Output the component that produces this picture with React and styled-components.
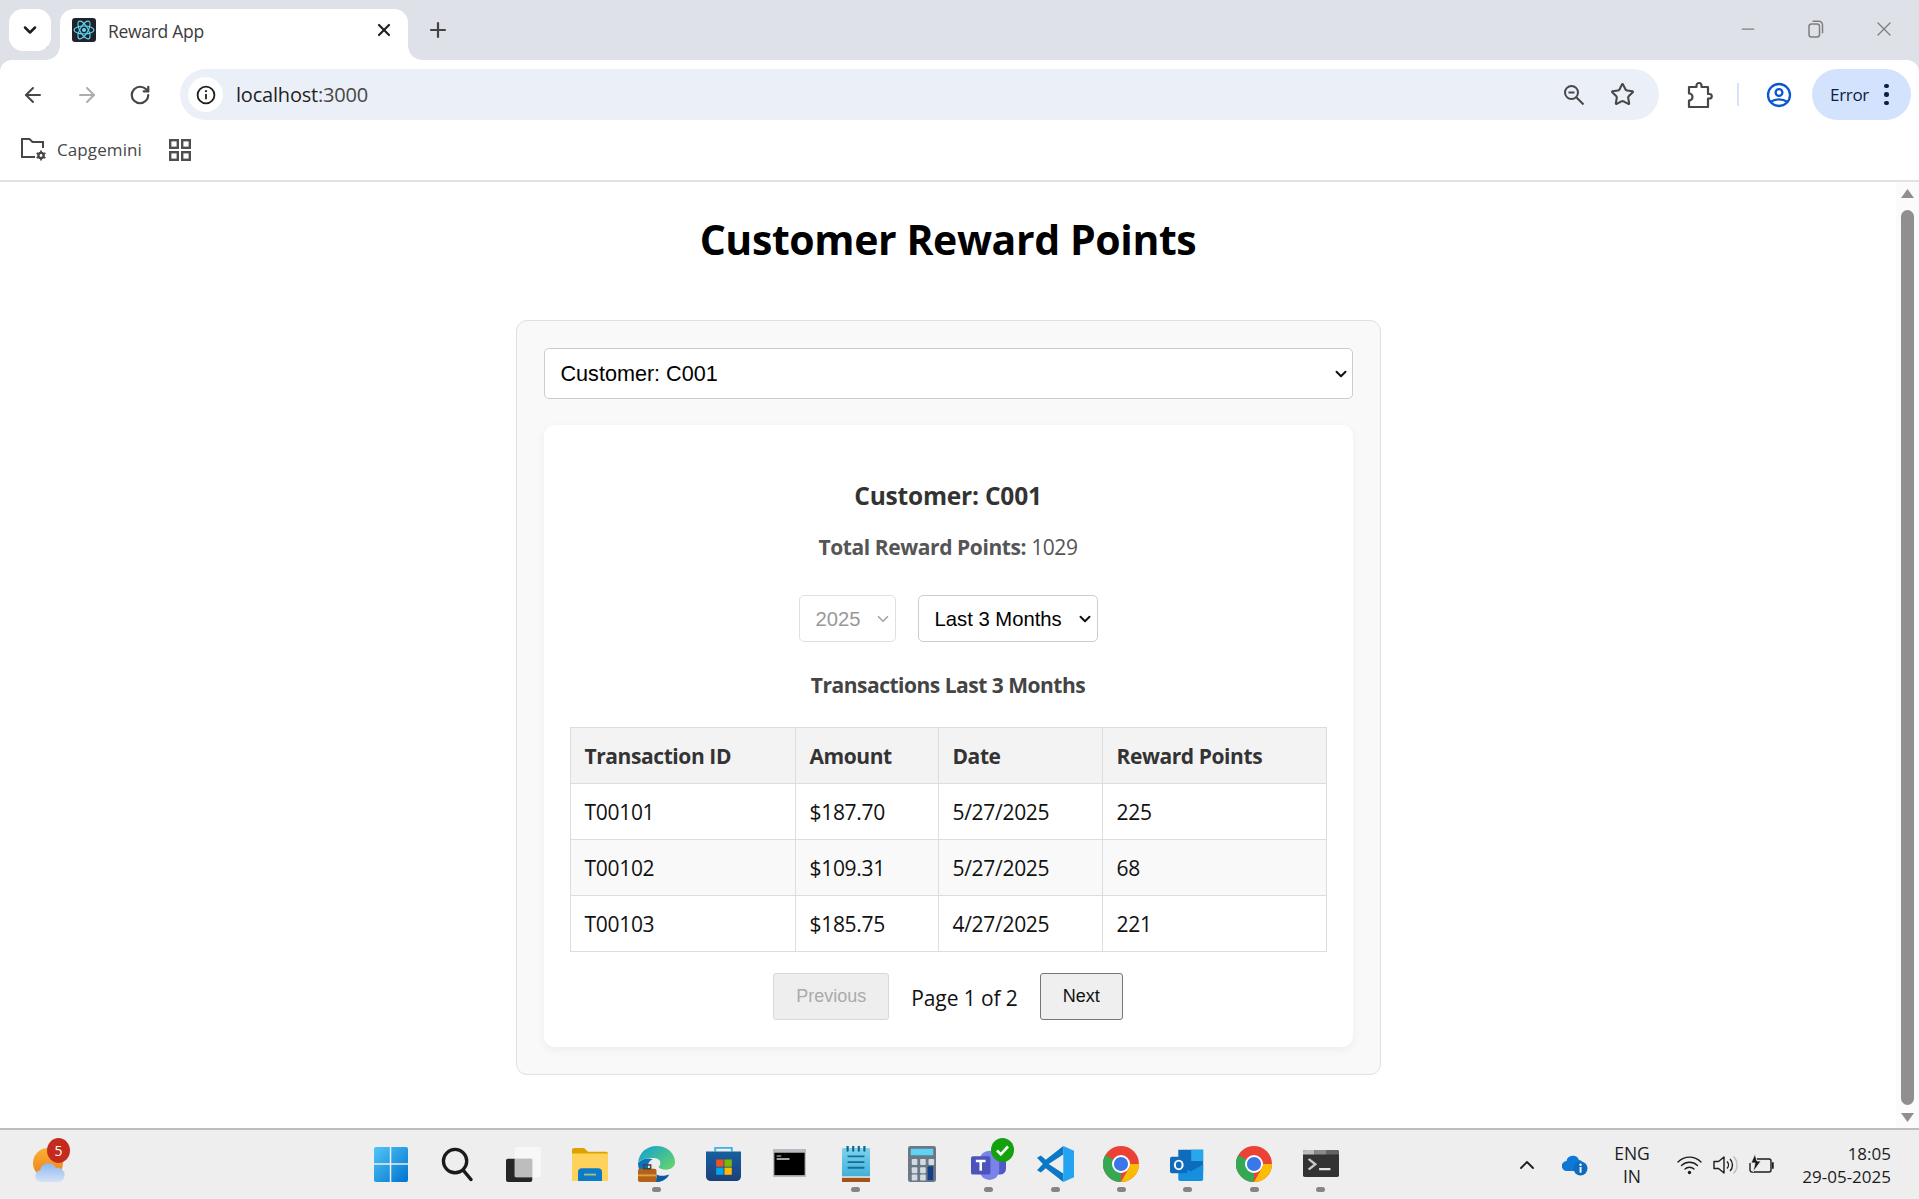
import React, { useState } from 'react';
import styled, { createGlobalStyle } from 'styled-components';
import { ArrowLeft, ArrowRight, RotateCw, Star, Plus, X, ChevronDown, ChevronUp, Minus } from 'lucide-react';

const uiFont = '"Open Sans", "Noto Sans", "Liberation Sans", sans-serif';
const formFont = '"Liberation Sans", Arial, sans-serif';

const GlobalStyle = createGlobalStyle`
  html, body { margin: 0; padding: 0; height: 100%; overflow: hidden; background: #fff; }
  * { box-sizing: border-box; }
  body { font-family: ${uiFont}; }
`;

const Screen = styled.div`
  width: 1919px;
  height: 1199px;
  display: flex;
  flex-direction: column;
  overflow: hidden;
`;

/* browser chrome */
const ChromeTop = styled.div`
  flex: none;
  background: #dee1e8;
`;

const TabStrip = styled.div`
  height: 60px;
  display: flex;
  align-items: flex-start;
  padding: 9px 0 0 9px;
`;

const TabSearch = styled.div`
  width: 42px;
  height: 42px;
  border-radius: 14px;
  background: #fff;
  display: flex;
  align-items: center;
  justify-content: center;
  color: #1f1f1f;
  margin-right: 9px;
`;

const Tab = styled.div`
  width: 348px;
  height: 51px;
  background: #fff;
  border-radius: 14px 14px 0 0;
  display: flex;
  align-items: center;
  padding: 0 14px 9px 12px;
  position: relative;
  &::before, &::after {
    content: '';
    position: absolute;
    bottom: 0;
    width: 14px;
    height: 14px;
  }
  &::before { left: -14px; background: radial-gradient(circle at 0 0, #dee1e8 13.5px, #fff 14px); }
  &::after { right: -14px; background: radial-gradient(circle at 14px 0, #dee1e8 13.5px, #fff 14px); }
`;

const TabTitle = styled.span`
  font-size: 17.5px;
  color: #3c3c3c;
  margin: 2px 0 0 12px;
  flex: 1;
  letter-spacing: -0.3px;
`;

const NewTab = styled.div`
  margin-left: 18px;
  height: 42px;
  display: flex;
  align-items: center;
  color: #444;
`;

const WindowControls = styled.div`
  margin-left: auto;
  display: flex;
  height: 40px;
  align-items: center;
  padding-right: 1px;
  color: #7f7f7f;
`;

const WindowButton = styled.div`
  width: 68px;
  display: flex;
  justify-content: center;
`;

const Toolbar = styled.div`
  height: 60px;
  background: #fff;
  display: flex;
  align-items: flex-start;
  padding: 9px 8px 0 0;
  border-radius: 12px 12px 0 0;
`;

const NavGroup = styled.div`
  width: 180px;
  flex: none;
  height: 51px;
  display: flex;
  align-items: center;
  padding-left: 21px;
  gap: 30px;
`;

const NavIcon = styled.span`
  display: flex;
  color: ${p => (p.$off ? '#adadad' : '#474747')};
`;

const Omnibox = styled.div`
  width: 1479px;
  height: 51px;
  background: #ebf0f8;
  border-radius: 26px;
  display: flex;
  align-items: center;
  padding: 0 24px 0 8px;
`;

const InfoChip = styled.div`
  width: 35px;
  height: 35px;
  border-radius: 50%;
  background: #fff;
  display: flex;
  align-items: center;
  justify-content: center;
`;

const Url = styled.span`
  margin-left: 13px;
  font-size: 20px;
  color: #1f1f1f;
  letter-spacing: -0.2px;
  flex: 1;
`;

const UrlPort = styled.span`
  color: #474747;
`;

const OmniActions = styled.div`
  display: flex;
  align-items: center;
  gap: 24px;
  color: #474747;
`;

const ToolActions = styled.div`
  flex: 1;
  height: 51px;
  display: flex;
  align-items: center;
  padding-left: 28px;
`;

const Divider = styled.span`
  width: 2px;
  height: 23px;
  background: #d3e3fd;
  margin: 0 27px 0 24px;
`;

const ErrorPill = styled.div`
  margin-left: auto;
  width: 99px;
  height: 51px;
  flex: none;
  border-radius: 26px;
  background: #d3e3fd;
  display: flex;
  align-items: center;
  padding-left: 18px;
  font-size: 17px;
  color: #0a1f44;
  letter-spacing: -0.3px;
  gap: 15px;
`;

const Dots = styled.span`
  display: flex;
  flex-direction: column;
  gap: 4px;
  i {
    display: block;
    width: 4.5px;
    height: 4.5px;
    border-radius: 50%;
    background: #0a1f44;
  }
`;

const Bookmarks = styled.div`
  height: 62px;
  flex: none;
  background: #fff;
  border-bottom: 2px solid #e2e2e2;
  display: flex;
  align-items: center;
  padding: 0 0 1px 20px;
`;

const BookmarkLabel = styled.span`
  font-size: 17px;
  color: #474747;
  margin: 0 27px 0 10px;
  letter-spacing: 0.1px;
`;

/* page */
const Viewport = styled.div`
  flex: 1;
  min-height: 0;
  display: flex;
  background: #fff;
`;

const Page = styled.main`
  flex: 1;
  min-width: 0;
  padding-top: 30px;
`;

const Title = styled.h1`
  margin: 0 0 54px;
  font-size: 41px;
  line-height: 54px;
  font-weight: 700;
  text-align: center;
  color: #000;
  letter-spacing: -0.4px;
`;

const Panel = styled.section`
  width: 865px;
  margin: 0 auto;
  padding: 27px;
  background: #f9f9f9;
  border: 1px solid #e0e0e0;
  border-radius: 11px;
  display: flex;
  flex-direction: column;
  gap: 26px;
`;

const SelectBox = styled.div`
  position: relative;
  width: ${p => p.$w};
  flex: none;
  svg {
    position: absolute;
    top: 50%;
    right: ${p => p.$arrowRight}px;
    transform: translateY(-50%);
    color: ${p => (p.$off ? '#a5a5a5' : '#111')};
    pointer-events: none;
  }
`;

const Select = styled.select`
  appearance: none;
  display: block;
  width: 100%;
  height: ${p => p.$h}px;
  padding: 0 0 0 ${p => p.$pad}px;
  font-family: ${formFont};
  font-size: ${p => p.$size}px;
  color: #000;
  background: #fff;
  border: 1px solid #ccc;
  border-radius: 5px;
  &:disabled {
    opacity: 1;
    color: #999;
    border-color: #e0e0e0;
  }
`;

const Card = styled.div`
  background: #fff;
  border-radius: 11px;
  padding: 55px 26px 27px;
  box-shadow: 0 3px 10px rgba(0, 0, 0, 0.05);
  text-align: center;
`;

const CustomerName = styled.h2`
  margin: 0 0 20px;
  font-size: 24.5px;
  line-height: 32px;
  font-weight: 700;
  color: #333;
  letter-spacing: -0.2px;
`;

const TotalPoints = styled.p`
  margin: 0 0 33px;
  font-size: 21px;
  line-height: 30px;
  color: #555;
  letter-spacing: -0.42px;
  strong { font-weight: 700; }
`;

const Filters = styled.div`
  display: flex;
  justify-content: center;
  gap: 22px;
  margin-bottom: 28px;
`;

const TableHeading = styled.h3`
  margin: 0 0 27px;
  font-size: 21px;
  line-height: 30px;
  font-weight: 700;
  color: #444;
  letter-spacing: -0.5px;
`;

const Table = styled.table`
  width: 756px;
  table-layout: fixed;
  border-collapse: collapse;
  font-size: 21px;
  text-align: left;
`;

const HeadCell = styled.th`
  width: ${p => p.$w}px;
  height: 56px;
  padding: 0 14px;
  background: #f3f3f3;
  border: 1px solid #ddd;
  color: #333;
  font-weight: 700;
  letter-spacing: -0.42px;
`;

const Row = styled.tr`
  &:nth-child(even) td { background: #f9f9f9; }
`;

const Cell = styled.td`
  height: 56px;
  padding: 0 14px;
  border: 1px solid #ddd;
  color: #111;
  letter-spacing: -0.3px;
`;

const Pager = styled.div`
  margin-top: 21px;
  display: flex;
  justify-content: center;
  align-items: center;
  gap: 22px;
`;

const PageButton = styled.button`
  height: 47px;
  width: ${p => p.$w}px;
  font-family: ${formFont};
  font-size: 18px;
  color: #111;
  background: #efefef;
  border: 1px solid #767676;
  border-radius: 3px;
  padding: 0;
  &:disabled {
    color: #aaa;
    background: #eee;
    border-color: #d8d8d8;
  }
`;

const PageLabel = styled.span`
  font-size: 21px;
  color: #111;
  letter-spacing: -0.1px;
  position: relative;
  top: 1px;
`;

const Scrollbar = styled.div`
  width: 23px;
  flex: none;
  background: #fbfbfb;
  display: flex;
  flex-direction: column;
  align-items: center;
  padding: 7px 0 6px;
  color: #8f8f8f;
`;

const ScrollThumb = styled.div`
  flex: 1;
  width: 13px;
  margin: 12px 0 8px;
  border-radius: 7px;
  background: #8f8f8f;
`;

/* taskbar */
const Taskbar = styled.footer`
  height: 71px;
  flex: none;
  background: #eeeeee;
  border-top: 2px solid #bdbdbd;
  display: flex;
  align-items: stretch;
`;

const Weather = styled.div`
  width: 358px;
  flex: none;
  padding: 9px 0 0 29px;
`;

const Badged = styled.div`
  position: relative;
  width: 40px;
  height: 44px;
  svg { position: absolute; left: 3px; top: 9px; }
`;

const CountBadge = styled.span`
  position: absolute;
  left: 18px;
  top: -1px;
  width: 23px;
  height: 25px;
  border-radius: 50%;
  background: #c42b1c;
  color: #fff;
  font-size: 14px;
  line-height: 25px;
  text-align: center;
`;

const Apps = styled.div`
  display: flex;
`;

const AppSlot = styled.div`
  width: 66.4px;
  position: relative;
  display: flex;
  justify-content: center;
  align-items: flex-start;
  padding-top: ${p => p.$top ?? 16}px;
`;

const RunningDot = styled.span`
  position: absolute;
  left: 50%;
  margin-left: -4.5px;
  top: 57px;
  width: 9px;
  height: 5px;
  border-radius: 3px;
  background: #858585;
`;

const TeamsCheck = styled.span`
  position: absolute;
  left: 35px;
  top: 8px;
  width: 23px;
  height: 24px;
  border-radius: 50%;
  background: #13a10e;
  display: flex;
  align-items: center;
  justify-content: center;
`;

const Tray = styled.div`
  margin-left: auto;
  display: flex;
  align-items: center;
  padding-right: 28px;
  color: #1c1c1c;
`;

const TrayIcon = styled.span`
  display: flex;
  width: ${p => p.$w}px;
  justify-content: center;
`;

const Lang = styled.div`
  width: 78px;
  text-align: center;
  font-size: 17.5px;
  line-height: 23px;
`;

const Clock = styled.div`
  width: 112px;
  text-align: right;
  font-size: 17px;
  line-height: 23px;
`;

function ReactFavicon() {
  return (
    <svg width="24" height="24" viewBox="0 0 24 24">
      <rect width="24" height="24" rx="3" fill="#20232a" />
      <g fill="none" stroke="#61dafb" strokeWidth="1.1">
        <ellipse cx="12" cy="12" rx="10" ry="4" />
        <ellipse cx="12" cy="12" rx="10" ry="4" transform="rotate(60 12 12)" />
        <ellipse cx="12" cy="12" rx="10" ry="4" transform="rotate(120 12 12)" />
      </g>
      <circle cx="12" cy="12" r="2" fill="#61dafb" />
    </svg>
  );
}

function InfoIcon() {
  return (
    <svg width="20" height="20" viewBox="0 0 20 20" fill="none" stroke="#1f1f1f" strokeWidth="1.8">
      <circle cx="10" cy="10" r="8.4" />
      <path d="M10 9v5.2" />
      <circle cx="10" cy="6.2" r="1.1" fill="#1f1f1f" stroke="none" />
    </svg>
  );
}

function ZoomOutIcon() {
  return (
    <svg width="24" height="24" viewBox="0 0 24 24" fill="none" stroke="currentColor" strokeWidth="2">
      <circle cx="9.5" cy="9.5" r="6.5" />
      <path d="M6.5 9.5h6M14.5 14.5l7 7" />
    </svg>
  );
}

function PuzzleIcon() {
  return (
    <svg width="26" height="28" viewBox="0 0 26 28" fill="none" stroke="#474747" strokeWidth="2.2" strokeLinejoin="round">
      <path d="M2 6h7.5V4.5a2.5 2.5 0 0 1 5 0V6H21v7h1.5a2 2 0 0 1 0 4.5H21V26H2v-6.5a3.5 3.5 0 0 0 0-7z" />
    </svg>
  );
}

function ProfileIcon() {
  return (
    <svg width="26" height="26" viewBox="0 0 26 26" fill="none" stroke="#0b57d0" strokeWidth="2.3">
      <circle cx="13" cy="13" r="11" />
      <circle cx="13" cy="10.5" r="3.4" />
      <path d="M4.5 20c5-3.6 12-3.6 17 0" />
    </svg>
  );
}

function FolderGearIcon() {
  return (
    <svg width="27" height="25" viewBox="0 0 27 25" fill="none" stroke="#474747" strokeWidth="2">
      <path d="M15 20H2V2h7.5l3 3H23v6" />
      <circle cx="21" cy="18.5" r="2.6" strokeWidth="2.4" />
      <path d="M21 13.5v2M21 21.5v2M16.6 16l1.8 1M23.6 20l1.8 1M16.6 21l1.8-1M23.6 17l1.8-1" strokeWidth="1.8" />
    </svg>
  );
}

function AppsGridIcon() {
  return (
    <svg width="22" height="22" viewBox="0 0 22 22" fill="none" stroke="#4f4f4f" strokeWidth="2.4">
      <rect x="1.2" y="1.2" width="7.6" height="7.6" />
      <rect x="13.2" y="1.2" width="7.6" height="7.6" />
      <rect x="1.2" y="13.2" width="7.6" height="7.6" />
      <rect x="13.2" y="13.2" width="7.6" height="7.6" />
    </svg>
  );
}

function RestoreIcon() {
  return (
    <svg width="16" height="18" viewBox="0 0 16 18" fill="none" stroke="currentColor" strokeWidth="1.5">
      <rect x="1" y="4" width="10.5" height="13" rx="2.5" />
      <path d="M4.5 1.2h6.5a3.5 3.5 0 0 1 3.5 3.5v8.5" />
    </svg>
  );
}

function WeatherIcon() {
  return (
    <svg width="34" height="36" viewBox="0 0 34 36">
      <defs>
        <linearGradient id="sunFill" x1="0" y1="0" x2="0" y2="1">
          <stop offset="0" stopColor="#f9b233" />
          <stop offset="1" stopColor="#ee7d1a" />
        </linearGradient>
        <linearGradient id="cloudFill" x1="0" y1="0" x2="0" y2="1">
          <stop offset="0" stopColor="#8db6ee" />
          <stop offset="1" stopColor="#d5e3f7" />
        </linearGradient>
      </defs>
      <circle cx="16" cy="15" r="15" fill="url(#sunFill)" />
      <path d="M9 34a6 6 0 0 1-1-11.8A8.5 8.5 0 0 1 24 20a6.8 6.8 0 0 1 3 14z" fill="url(#cloudFill)" />
    </svg>
  );
}

function StartIcon() {
  return (
    <svg width="34" height="35" viewBox="0 0 36 36" preserveAspectRatio="none">
      <defs>
        <linearGradient id="startFill" x1="0" y1="0" x2="1" y2="1">
          <stop offset="0" stopColor="#52c6f8" />
          <stop offset="1" stopColor="#0072ce" />
        </linearGradient>
      </defs>
      <rect width="36" height="36" rx="2" fill="url(#startFill)" />
      <path d="M17.5 0v36M0 17.5h36" stroke="#eee" strokeWidth="1.6" />
    </svg>
  );
}

function SearchIcon() {
  return (
    <svg width="33" height="35" viewBox="0 0 34 36" fill="none" stroke="#1a1a1a" strokeWidth="3.4" strokeLinecap="round" preserveAspectRatio="none">
      <circle cx="14.5" cy="14.5" r="12" />
      <path d="M23 24l8 9.5" />
    </svg>
  );
}

function TaskViewIcon() {
  return (
    <svg width="35" height="35" viewBox="0 0 36 36" preserveAspectRatio="none">
      <rect x="0" y="12" width="27" height="24" rx="2" fill="#262626" />
      <rect x="9" y="0" width="27" height="31" rx="2" fill="#f8f8f8" opacity="0.85" />
      <rect x="9" y="12" width="18" height="19" fill="#bdbdbd" />
    </svg>
  );
}

function ExplorerIcon() {
  return (
    <svg width="36" height="33" viewBox="0 0 36 36" preserveAspectRatio="none">
      <path d="M0 2a2 2 0 0 1 2-2h10l4 4h18a2 2 0 0 1 2 2v8H0z" fill="#e0a100" />
      <path d="M0 6h36v30H0z" fill="#ffd35b" />
      <path d="M6 36V26a4 4 0 0 1 4-4h16a4 4 0 0 1 4 4v10z" fill="#0c7cc9" />
      <rect x="12" y="28" width="12" height="2" fill="#ffd35b" opacity="0.7" />
    </svg>
  );
}

function EdgeIcon() {
  return (
    <svg width="37" height="36" viewBox="0 0 38 38" preserveAspectRatio="none">
      <defs>
        <linearGradient id="edgeFill" x1="0" y1="0" x2="1" y2="0.8">
          <stop offset="0" stopColor="#0f9fd8" />
          <stop offset="1" stopColor="#63d26f" />
        </linearGradient>
      </defs>
      <path d="M0 18C1 7 9 0 19 0c11 0 19 8 19 17 0 5-4 8-9 8-4 0-7-1-8-3 3-2 3-8-3-9C10 12 3 14 0 18z" fill="url(#edgeFill)" />
      <path d="M0 18c3-4 10-6 15-4-5 2-6 8-3 13 2 4 6 8 14 9-2 1-4 2-7 2C8 38 0 29 0 18z" fill="#0d71b9" />
      <path d="M19 38c5 0 11-3 13-8-5 2-10 2-13 0z" fill="#0a5aa5" />
      <rect x="0" y="24" width="19" height="14" rx="2" fill="#b4621a" />
      <rect x="0" y="30" width="19" height="2" fill="#e0a33b" />
      <rect x="6" y="20" width="7" height="4" fill="none" stroke="#444" strokeWidth="1.6" />
    </svg>
  );
}

function StoreIcon() {
  return (
    <svg width="35" height="36" viewBox="0 0 38 40" preserveAspectRatio="none">
      <defs>
        <linearGradient id="storeFill" x1="0" y1="0" x2="0" y2="1">
          <stop offset="0" stopColor="#17609f" />
          <stop offset="1" stopColor="#1d3f7a" />
        </linearGradient>
      </defs>
      <path d="M10 6V2h18v4" fill="none" stroke="#3bb0ea" strokeWidth="2" />
      <path d="M0 6h38v28a5 5 0 0 1-5 5H5a5 5 0 0 1-5-5z" fill="url(#storeFill)" />
      <rect x="11" y="15" width="8" height="8" fill="#f25022" />
      <rect x="20" y="15" width="8" height="8" fill="#7fba00" />
      <rect x="11" y="24" width="8" height="8" fill="#00a4ef" />
      <rect x="20" y="24" width="8" height="8" fill="#ffb900" />
    </svg>
  );
}

function CmdIcon() {
  return (
    <svg width="33" height="28" viewBox="0 0 36 30" preserveAspectRatio="none">
      <rect width="36" height="30" fill="#b8bcc0" />
      <rect x="1.5" y="4" width="33" height="24" fill="#000" />
      <path d="M4 7h5v1H4zM4 10h14v1.5H4z" fill="#d9d9d9" />
    </svg>
  );
}

function NotepadIcon() {
  return (
    <svg width="28" height="36" viewBox="0 0 30 38" preserveAspectRatio="none">
      <defs>
        <linearGradient id="padFill" x1="0" y1="0" x2="0" y2="1">
          <stop offset="0" stopColor="#7ed3ee" />
          <stop offset="1" stopColor="#36a9d6" />
        </linearGradient>
      </defs>
      <rect y="2" width="30" height="36" rx="1" fill="url(#padFill)" />
      <rect y="33" width="30" height="5" fill="#a5521a" />
      <rect y="32" width="30" height="1.5" fill="#f3efe6" />
      <path d="M6 0v5M12 0v5M18 0v5M24 0v5" stroke="#14688f" strokeWidth="2.4" strokeLinecap="round" />
      <path d="M6 11h18M6 17h18M6 23h18" stroke="#136f97" strokeWidth="2" />
    </svg>
  );
}

function CalculatorIcon() {
  const keys = [[4, 14], [13, 14], [22, 14], [4, 23], [13, 23], [4, 31], [13, 31]];
  return (
    <svg width="28" height="36" viewBox="0 0 30 39" preserveAspectRatio="none">
      <rect width="30" height="39" rx="2.5" fill="#6b7885" />
      <rect x="3" y="3" width="24" height="7" fill="#5fd3f3" />
      {keys.map(([x, y]) => (
        <rect key={`${x}-${y}`} x={x} y={y} width="6" height="6.5" rx="1" fill="#d3dae1" />
      ))}
      <rect x="21" y="22" width="6" height="15" rx="1" fill="#123f86" />
    </svg>
  );
}

function TeamsIcon() {
  return (
    <svg width="35" height="33" viewBox="0 0 36 36" preserveAspectRatio="none">
      <rect x="23" y="8" width="13" height="22" rx="6" fill="#5059c9" />
      <rect x="9" y="4" width="20" height="32" rx="10" fill="#7b83eb" />
      <rect x="0" y="10" width="20" height="20" rx="2" fill="#4b53bc" />
      <path d="M5 14h10v2.5h-3.7V26H8.7v-9.5H5z" fill="#fff" />
    </svg>
  );
}

function VsCodeIcon() {
  return (
    <svg width="37" height="36" viewBox="0 0 38 38" preserveAspectRatio="none">
      <path d="M27 0l11 5v28l-11 5V0z" fill="#24a4f0" />
      <path d="M27 0v9L12 19l15 10v9L9 23.5 4 28 0 25.5 6 19 0 12.5 4 10l5 4.5z" fill="#0a78c6" />
    </svg>
  );
}

function ChromeIcon() {
  return (
    <svg width="36" height="36" viewBox="0 0 38 38">
      <circle cx="19" cy="19" r="19" fill="#ea4335" />
      <path d="M19 19L2.5 9.5A19 19 0 0 0 19 38z" fill="#34a853" />
      <path d="M19 19h19A19 19 0 0 1 19 38L28.5 21.5z" fill="#fbbc04" />
      <circle cx="19" cy="19" r="9.5" fill="#fff" />
      <circle cx="19" cy="19" r="7.5" fill="#3b78e7" />
    </svg>
  );
}

function OutlookIcon() {
  return (
    <svg width="35" height="33" viewBox="0 0 38 38" preserveAspectRatio="none">
      <rect x="9" y="2" width="27" height="26" fill="#0f6cbd" />
      <rect x="23" y="2" width="13" height="13" fill="#28a8ea" />
      <path d="M9 19l13.5 8L36 19v17a2 2 0 0 1-2 2H11a2 2 0 0 1-2-2z" fill="#1490df" />
      <rect x="0" y="10" width="19" height="19" rx="2" fill="#0f6cbd" />
      <ellipse cx="9.5" cy="19.5" rx="4.2" ry="5" fill="none" stroke="#fff" strokeWidth="2.2" />
    </svg>
  );
}

function TerminalIcon() {
  return (
    <svg width="36" height="27" viewBox="0 0 38 36" preserveAspectRatio="none">
      <rect width="38" height="36" rx="2.5" fill="#333" />
      <path d="M0 2.5A2.5 2.5 0 0 1 2.5 0H12v6H0z" fill="#bdbdbd" />
      <rect x="12" y="0" width="13" height="6" fill="#8a8a8a" />
      <path d="M25 0h10.5A2.5 2.5 0 0 1 38 2.5V6H25z" fill="#636363" />
      <path d="M6 12l7 7-7 7" fill="none" stroke="#c9c9c9" strokeWidth="2.8" />
      <rect x="17" y="24" width="12" height="3" fill="#e4e4e4" />
    </svg>
  );
}

function OneDriveIcon() {
  return (
    <svg width="26" height="22" viewBox="0 0 26 22">
      <path d="M5 17a5 5 0 0 1-.5-10A6.5 6.5 0 0 1 17 6a5 5 0 0 1 4 5H20a6 6 0 0 0-6 6z" fill="#0f78d4" />
      <circle cx="18.5" cy="14.5" r="7" fill="#0f6cbd" />
      <rect x="17.6" y="13" width="1.9" height="5.6" fill="#fff" />
      <circle cx="18.5" cy="10.8" r="1.2" fill="#fff" />
    </svg>
  );
}

function WifiIcon() {
  return (
    <svg width="25" height="20" viewBox="0 0 25 20" fill="none" stroke="#1c1c1c" strokeWidth="1.4" strokeLinecap="round">
      <path d="M1 7c6.5-6.5 16.5-6.5 23 0" />
      <path d="M4.5 10.5c4.5-4.3 11.500-4.3 16 0" />
      <path d="M8 14c2.5-2.3 6.5-2.3 9 0" />
      <circle cx="12.5" cy="17.5" r="1.7" fill="#1c1c1c" stroke="none" />
    </svg>
  );
}

function VolumeIcon() {
  return (
    <svg width="25" height="22" viewBox="0 0 25 22" fill="none" stroke="#1c1c1c" strokeWidth="1.4">
      <path d="M1 7.5h4.5L11 3v16l-5.5-4.500H1z" strokeLinejoin="round" />
      <path d="M14 7.5a5 5 0 0 1 0 7M17 5a8.5 8.5 0 0 1 0 12" />
      <path d="M20.5 2.5a12 12 0 0 1 0 17" stroke="#bdbdbd" />
    </svg>
  );
}

function BatteryIcon() {
  return (
    <svg width="25" height="21" viewBox="0 0 25 21" fill="none" stroke="#1c1c1c" strokeWidth="1.4">
      <path d="M8 5h12a2 2 0 0 1 2 2v9a2 2 0 0 1-2 2H3a2 2 0 0 1-2-2v-7" />
      <path d="M23 9h1v5h-1" fill="#1c1c1c" />
      <path d="M6 0L2 9h4l-2 9 8-11H8z" fill="#1c1c1c" stroke="#eee" strokeWidth="0.8" />
    </svg>
  );
}

const taskApps = [
  { key: 'start', icon: <StartIcon />, top: 17 },
  { key: 'search', icon: <SearchIcon />, top: 17 },
  { key: 'taskview', icon: <TaskViewIcon />, top: 17 },
  { key: 'explorer', icon: <ExplorerIcon />, top: 18 },
  { key: 'edge', icon: <EdgeIcon />, running: true },
  { key: 'store', icon: <StoreIcon />, top: 16 },
  { key: 'cmd', icon: <CmdIcon />, top: 19 },
  { key: 'notepad', icon: <NotepadIcon />, running: true },
  { key: 'calc', icon: <CalculatorIcon /> },
  { key: 'teams', icon: <TeamsIcon />, running: true, check: true, top: 17 },
  { key: 'vscode', icon: <VsCodeIcon />, running: true },
  { key: 'chrome', icon: <ChromeIcon />, running: true },
  { key: 'outlook', icon: <OutlookIcon />, running: true, top: 18 },
  { key: 'chrome2', icon: <ChromeIcon />, running: true },
  { key: 'terminal', icon: <TerminalIcon />, running: true, top: 20 },
];

const columns = [
  { label: 'Transaction ID', width: 225 },
  { label: 'Amount', width: 143 },
  { label: 'Date', width: 164 },
  { label: 'Reward Points', width: 224 },
];

const transactions = [
  { id: 'T00101', amount: '$187.70', date: '5/27/2025', points: 225 },
  { id: 'T00102', amount: '$109.31', date: '5/27/2025', points: 68 },
  { id: 'T00103', amount: '$185.75', date: '4/27/2025', points: 221 },
];

function App() {
  const [customer, setCustomer] = useState('C001');
  const [range, setRange] = useState('last3');

  return (
    <Screen>
      <GlobalStyle />
      <ChromeTop>
        <TabStrip>
          <TabSearch><ChevronDown size={20} strokeWidth={3} /></TabSearch>
          <Tab>
            <ReactFavicon />
            <TabTitle>Reward App</TabTitle>
            <X size={20} strokeWidth={2.6} color="#222" />
          </Tab>
          <NewTab><Plus size={24} strokeWidth={2.2} /></NewTab>
          <WindowControls>
            <WindowButton><Minus size={20} strokeWidth={1.5} /></WindowButton>
            <WindowButton><RestoreIcon /></WindowButton>
            <WindowButton><X size={24} strokeWidth={1.4} /></WindowButton>
          </WindowControls>
        </TabStrip>

        <Toolbar>
          <NavGroup>
            <NavIcon><ArrowLeft size={24} strokeWidth={2} /></NavIcon>
            <NavIcon $off><ArrowRight size={24} strokeWidth={2} /></NavIcon>
            <NavIcon><RotateCw size={22} strokeWidth={2.4} /></NavIcon>
          </NavGroup>
          <Omnibox>
            <InfoChip><InfoIcon /></InfoChip>
            <Url>localhost<UrlPort>:3000</UrlPort></Url>
            <OmniActions>
              <ZoomOutIcon />
              <Star size={25} strokeWidth={2} />
            </OmniActions>
          </Omnibox>
          <ToolActions>
            <PuzzleIcon />
            <Divider />
            <ProfileIcon />
            <ErrorPill>
              Error
              <Dots><i /><i /><i /></Dots>
            </ErrorPill>
          </ToolActions>
        </Toolbar>
      </ChromeTop>

      <Bookmarks>
        <FolderGearIcon />
        <BookmarkLabel>Capgemini</BookmarkLabel>
        <AppsGridIcon />
      </Bookmarks>

      <Viewport>
        <Page>
          <Title>Customer Reward Points</Title>
          <Panel>
            <SelectBox $w="100%" $arrowRight={3}>
              <Select $h={51} $pad={16} $size={21.6} value={customer} onChange={e => setCustomer(e.target.value)}>
                <option value="C001">Customer: C001</option>
                <option value="C002">Customer: C002</option>
              </Select>
              <ChevronDown size={18} strokeWidth={2.6} />
            </SelectBox>
            <Card>
              <CustomerName>Customer: {customer}</CustomerName>
              <TotalPoints><strong>Total Reward Points:</strong> 1029</TotalPoints>
              <Filters>
                <SelectBox $w="97px" $arrowRight={4} $off>
                  <Select disabled $h={47} $pad={16} $size={20.25} defaultValue="2025">
                    <option>2025</option>
                  </Select>
                  <ChevronDown size={18} strokeWidth={2.2} />
                </SelectBox>
                <SelectBox $w="180px" $arrowRight={4}>
                  <Select $h={47} $pad={16} $size={20.25} value={range} onChange={e => setRange(e.target.value)}>
                    <option value="last3">Last 3 Months</option>
                    <option value="all">All</option>
                  </Select>
                  <ChevronDown size={18} strokeWidth={2.6} />
                </SelectBox>
              </Filters>
              <TableHeading>Transactions Last 3 Months</TableHeading>
              <Table>
                <thead>
                  <tr>
                    {columns.map(col => (
                      <HeadCell key={col.label} $w={col.width}>{col.label}</HeadCell>
                    ))}
                  </tr>
                </thead>
                <tbody>
                  {transactions.map(t => (
                    <Row key={t.id}>
                      <Cell>{t.id}</Cell>
                      <Cell>{t.amount}</Cell>
                      <Cell>{t.date}</Cell>
                      <Cell>{t.points}</Cell>
                    </Row>
                  ))}
                </tbody>
              </Table>
              <Pager>
                <PageButton disabled $w={116}>Previous</PageButton>
                <PageLabel>Page 1 of 2</PageLabel>
                <PageButton $w={83}>Next</PageButton>
              </Pager>
            </Card>
          </Panel>
        </Page>
        <Scrollbar>
          <svg width="13" height="9" viewBox="0 0 13 9"><path d="M6.5 0L13 9H0z" fill="currentColor" /></svg>
          <ScrollThumb />
          <svg width="13" height="9" viewBox="0 0 13 9"><path d="M0 0h13L6.5 9z" fill="currentColor" /></svg>
        </Scrollbar>
      </Viewport>

      <Taskbar>
        <Weather>
          <Badged>
            <WeatherIcon />
            <CountBadge>5</CountBadge>
          </Badged>
        </Weather>
        <Apps>
          {taskApps.map(app => (
            <AppSlot key={app.key} $top={app.top}>
              {app.icon}
              {app.check && (
                <TeamsCheck>
                  <svg width="13" height="11" viewBox="0 0 13 11" fill="none" stroke="#fff" strokeWidth="2.6"><path d="M1 5.5l3.8 3.8L12 1.5" /></svg>
                </TeamsCheck>
              )}
              {app.running && <RunningDot />}
            </AppSlot>
          ))}
        </Apps>
        <Tray>
          <TrayIcon $w={60}><ChevronUp size={24} strokeWidth={1.8} /></TrayIcon>
          <TrayIcon $w={36}><OneDriveIcon /></TrayIcon>
          <Lang>ENG<br />IN</Lang>
          <TrayIcon $w={36}><WifiIcon /></TrayIcon>
          <TrayIcon $w={36}><VolumeIcon /></TrayIcon>
          <TrayIcon $w={36}><BatteryIcon /></TrayIcon>
          <Clock>18:05<br />29-05-2025</Clock>
        </Tray>
      </Taskbar>
    </Screen>
  );
}

export default App;
